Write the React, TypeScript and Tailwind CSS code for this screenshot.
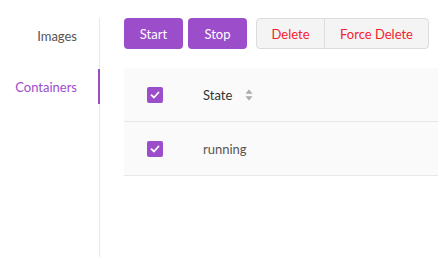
import React from "react";

function Check() {
  return (
    <span className="flex h-4 w-4 items-center justify-center rounded-[2px] bg-[#9b4dca]">
      <svg width="10" height="8" viewBox="0 0 10 8" fill="none">
        <path d="M1.5 4.2 L4 6.5 L8.5 1.5" stroke="white" strokeWidth="1.8" strokeLinecap="round" strokeLinejoin="round" />
      </svg>
    </span>
  );
}

function SortIcon() {
  return (
    <svg width="8" height="12" viewBox="0 0 8 12" className="ml-[13px]">
      <path d="M4 0.5 L7.5 4.8 L0.5 4.8 Z" fill="#aaa" />
      <path d="M4 11.5 L7.5 7.2 L0.5 7.2 Z" fill="#aaa" />
    </svg>
  );
}

export default function App() {
  return (
    <div className="flex h-[257px] w-[438px] overflow-hidden bg-white text-[13px]" style={{ fontFamily: "Lato, 'Open Sans', sans-serif" }}>
      <div className="mt-[18px] flex w-[100px] shrink-0 flex-col gap-4 border-r border-[#e8e8e8]">
        <div className="flex h-[35px] items-center justify-end pr-[22px] pt-[2px] text-[#555]">Images</div>
        <div className="relative flex h-[35px] items-center justify-end pr-[22px] pt-[2px] text-[#9b4dca]">
          Containers
          <span className="absolute right-[-1px] top-0 h-full w-[2px] bg-[#9b4dca]" />
        </div>
      </div>
      <div className="flex flex-1 flex-col pl-[24px] pt-[18px]">
        <div className="flex h-[31px] items-center">
          <button className="h-[31px] w-[59px] rounded-[4px] bg-[#9b4dca] pt-[2px] text-white">Start</button>
          <button className="ml-[5px] h-[31px] w-[59px] rounded-[4px] bg-[#9b4dca] pt-[2px] text-white">Stop</button>
          <div className="ml-[9px] flex h-[31px] overflow-hidden rounded-[4px] border border-[#dcdcdc] bg-[#f4f4f4]">
            <button className="w-[68px] border-r border-[#dcdcdc] pt-[2px] text-[#f5222d]">Delete</button>
            <button className="w-[103px] pt-[2px] text-[#f5222d]">Force Delete</button>
          </div>
        </div>
        <div className="mt-[19px] flex flex-col">
          <div className="flex h-[54px] items-center border-b border-[#e8e8e8] bg-[#fafafa]">
            <div className="w-[79px] pl-[23px]"><Check /></div>
            <div className="flex items-center text-[#333]"><span className="pt-[2px]">State</span><SortIcon /></div>
          </div>
          <div className="flex h-[54px] items-center border-b border-[#e8e8e8] bg-[#fafafa]">
            <div className="w-[79px] pl-[23px]"><Check /></div>
            <div className="pt-[3px] text-[#555]">running</div>
          </div>
        </div>
      </div>
    </div>
  );
}
